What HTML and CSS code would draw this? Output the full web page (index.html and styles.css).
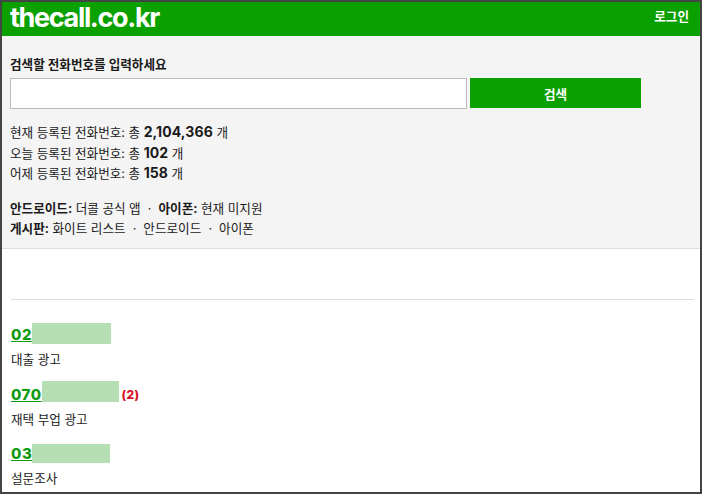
FILE: index.html
```html
<!DOCTYPE html>
<html lang="ko">
<head>
  <meta charset="UTF-8">
  <title>더콜</title>
  <link rel="stylesheet" href="styles.css">
</head>
<body>
<div class="page">
  <header class="top-bar">
    <a class="logo" href="#">thecall.co.kr</a>
    <a class="login" href="#">로그인</a>
  </header>

  <section class="search-panel">
    <form class="search-form">
      <label class="search-label" for="phone">검색할 전화번호를 입력하세요</label>
      <div class="search-row">
        <input class="search-input" id="phone" type="text">
        <button class="search-button" type="button">검색</button>
      </div>
    </form>

    <div class="stats">
      <p>현재 등록된 전화번호: 총 <b>2,104,366</b> 개</p>
      <p>오늘 등록된 전화번호: 총 <b>102</b> 개</p>
      <p>어제 등록된 전화번호: 총 <b>158</b> 개</p>
    </div>

    <div class="links">
      <p><b>안드로이드:</b> 더콜 공식 앱 &nbsp;·&nbsp; <b>아이폰:</b> 현재 미지원</p>
      <p><b>게시판:</b> 화이트 리스트 &nbsp;·&nbsp; 안드로이드 &nbsp;·&nbsp; 아이폰</p>
    </div>
  </section>

  <main class="results">
    <hr class="divider">

    <div class="result">
      <div class="result-title"><a class="number" href="#">02</a><span class="blur blur-a"></span></div>
      <p class="result-desc">대출 광고</p>
    </div>
    <div class="result">
      <div class="result-title"><a class="number" href="#">070</a><span class="blur blur-b"></span><span class="count">(2)</span></div>
      <p class="result-desc">재택 부업 광고</p>
    </div>
    <div class="result">
      <div class="result-title"><a class="number" href="#">03</a><span class="blur blur-c"></span></div>
      <p class="result-desc">설문조사</p>
    </div>
  </main>
</div>
</body>
</html>
```

FILE: styles.css
```css
html, body {
  margin: 0;
  padding: 0;
}

body {
  background: #fff;
  color: #1a1a1a;
  font-family: "Inter", "Noto Sans CJK KR", sans-serif;
  font-size: 12.6px;
}

p {
  margin: 0;
}

.page {
  box-sizing: border-box;
  width: 702px;
  height: 494px;
  border: 2px solid #444;
  overflow: hidden;
}

.top-bar {
  display: flex;
  justify-content: space-between;
  align-items: center;
  height: 34px;
  padding: 0 11px 0 8px;
  background: #0aa000;
}

.logo {
  color: #fff;
  font-size: 27px;
  font-weight: 700;
  letter-spacing: -1.35px;
  text-decoration: none;
  margin-top: -4px;
}

.login {
  color: #fff;
  font-weight: 700;
  font-size: 12.6px;
  text-decoration: none;
  margin-top: -7px;
}

.search-panel {
  box-sizing: border-box;
  height: 213px;
  padding: 20px 8px 0;
  border-bottom: 1px solid #ddd;
  background: #f4f4f4;
}

.search-label {
  display: block;
  height: 22px;
  font-weight: 700;
  line-height: 18px;
}

.search-row {
  display: flex;
  gap: 3px;
  height: 31px;
}

.search-input {
  box-sizing: border-box;
  width: 457px;
  height: 31px;
  padding: 0;
  border: 1px solid #bbb;
  background: #fff;
}

.search-button {
  width: 171px;
  height: 30px;
  border: 0;
  padding: 0;
  background: #0aa000;
  color: #fff;
  font-family: inherit;
  font-size: 12.6px;
  font-weight: 700;
}

.stats {
  margin-top: 14px;
  line-height: 20.5px;
}

.stats b {
  font-size: 14px;
  line-height: 1;
  letter-spacing: 0.1px;
}

.links {
  margin-top: 14px;
  line-height: 20.5px;
}

.results {
  padding: 0 6px 0 9px;
}

.divider {
  height: 1px;
  margin: 50px 0 23px;
  border: 0;
  background: #ddd;
}

.result {
  height: 59.5px;
}

.result-title {
  display: flex;
  align-items: center;
  height: 21px;
  font-weight: 700;
}

.number {
  color: #0f9a0f;
  font-size: 15px;
  font-weight: 800;
  letter-spacing: 0.5px;
  margin-top: 2px;
}

.blur {
  display: block;
  height: 21px;
  background: #b5dfb2;
}

.blur-a { width: 79px; }
.blur-b { width: 77px; margin-bottom: 3px; }
.blur-c { width: 78px; height: 19px; margin-top: 1px; }

.count {
  margin-left: 3px;
  color: #d8102a;
  font-size: 12px;
  font-weight: 800;
  letter-spacing: 0.4px;
  margin-top: 2px;
}

.result-desc {
  margin-top: 6px;
  line-height: 20px;
}
```
